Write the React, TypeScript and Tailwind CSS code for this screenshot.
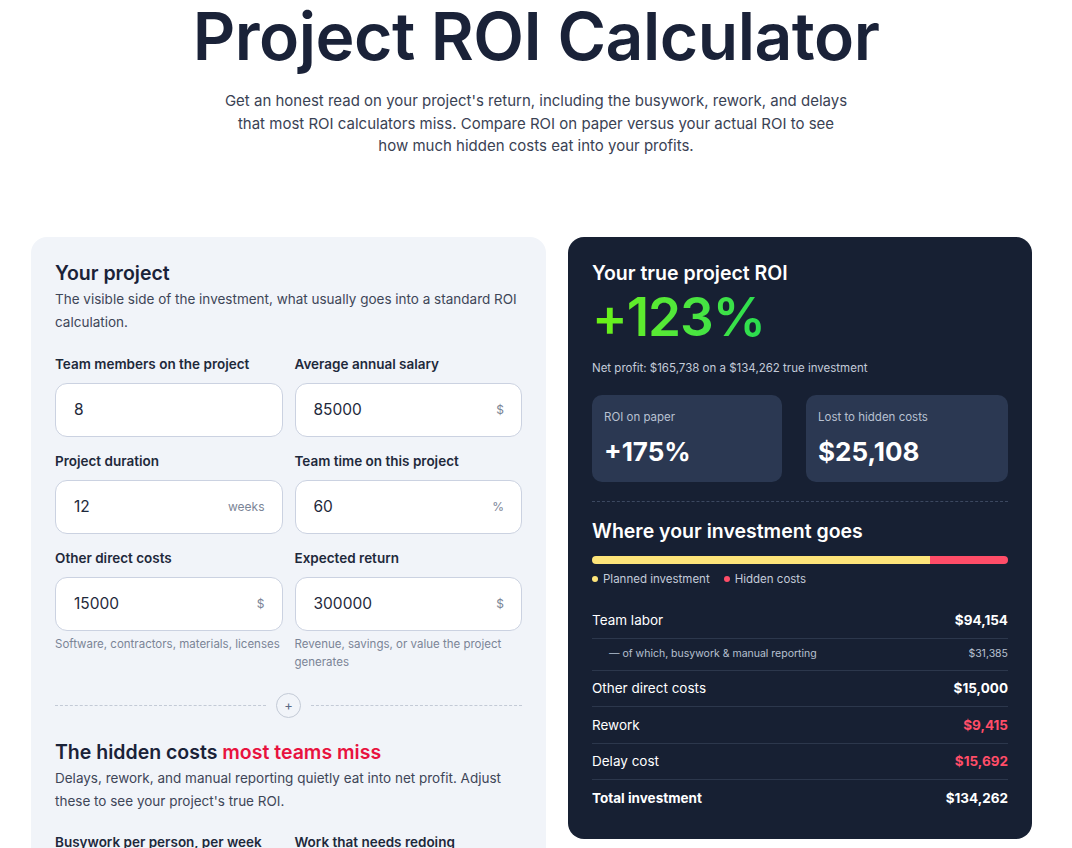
import React from 'react';

const font = { fontFamily: 'Inter, "Noto Sans", sans-serif' };

function Field({
  label,
  value,
  suffix,
  hint,
}: {
  label: string;
  value: string;
  suffix?: string;
  hint?: string;
}) {
  return (
    <div className="flex flex-col">
      <label className="text-[13.5px] font-semibold leading-[20px] text-[#1e293b]">{label}</label>
      <div className="mt-[9px] flex h-[54px] items-center justify-between rounded-[12px] border border-[#cbd2e1] bg-white pl-[18px] pr-[17px]">
        <span className="text-[15.5px] text-[#1e293b]">{value}</span>
        {suffix ? <span className="text-[12px] text-[#7b8597]">{suffix}</span> : null}
      </div>
      {hint ? <p className="mt-[4px] text-[11.5px] leading-[18px] text-[#7b8597]">{hint}</p> : null}
    </div>
  );
}

function Row({
  label,
  value,
  tone = 'white',
  sub = false,
  strong = false,
}: {
  label: string;
  value: string;
  tone?: 'white' | 'red';
  sub?: boolean;
  strong?: boolean;
}) {
  return (
    <div
      className={`flex items-center justify-between border-b border-[#2c374c] last:border-0 ${
        sub ? 'h-[32px] pl-[17px]' : 'h-[36.5px]'
      }`}
    >
      <span
        className={
          sub
            ? 'text-[10.5px] text-[#b8c1d1]'
            : strong
              ? 'text-[13.5px] font-bold text-white'
              : 'text-[13.5px] text-white'
        }
      >
        {sub ? '— ' : ''}
        {label}
      </span>
      <span
        className={
          sub
            ? 'text-[10.5px] text-[#b8c1d1]'
            : `text-[13.5px] font-bold ${tone === 'red' ? 'text-[#ff4d68]' : 'text-white'}`
        }
      >
        {value}
      </span>
    </div>
  );
}

export default function App() {
  return (
    <div className="min-h-[848px] bg-white" style={font}>
      <header className="flex flex-col items-center text-center">
        <h1 className="mt-[-6px] text-[66px] font-semibold leading-[84px] tracking-[-0.5px] text-[#1a2238]">
          Project ROI Calculator
        </h1>
        <p className="mt-[12px] w-[628px] text-[15px] leading-[22.5px] text-[#3a4254]">
          Get an honest read on your project's return, including the busywork, rework, and delays
          that most ROI calculators miss. Compare ROI on paper versus your actual ROI to see how much
          hidden costs eat into your profits.
        </p>
      </header>

      <div className="mt-[79px] grid grid-cols-[515px_464px] items-start gap-[22px] pl-[31px]">
        <section className="h-[640px] rounded-t-[16px] bg-[#f1f4f9] px-[24px] pt-[22px]">
          <h2 className="text-[19.5px] font-semibold leading-[28px] text-[#1a2238]">Your project</h2>
          <p className="mt-[1px] text-[13.5px] leading-[23px] text-[#3e4658]">
            The visible side of the investment, what usually goes into a standard ROI calculation.
          </p>
          <div className="mt-[20px] grid grid-cols-2 gap-x-[12px] gap-y-[14px]">
            <Field label="Team members on the project" value="8" />
            <Field label="Average annual salary" value="85000" suffix="$" />
            <Field label="Project duration" value="12" suffix="weeks" />
            <Field label="Team time on this project" value="60" suffix="%" />
            <Field
              label="Other direct costs"
              value="15000"
              suffix="$"
              hint="Software, contractors, materials, licenses"
            />
            <Field
              label="Expected return"
              value="300000"
              suffix="$"
              hint="Revenue, savings, or value the project generates"
            />
          </div>

          <div className="mt-[22px] flex items-center gap-[10px]">
            <div className="flex-1 border-t border-dashed border-[#c3cad6]" />
            <div className="flex h-[25px] w-[25px] items-center justify-center rounded-full border border-[#c3cad6] text-[13px] leading-none text-[#5a6a85]">
              +
            </div>
            <div className="flex-1 border-t border-dashed border-[#c3cad6]" />
          </div>

          <h2 className="mt-[20px] text-[19.5px] font-semibold leading-[28px] text-[#1a2238]">
            The hidden costs <span className="text-[#e8123f]">most teams miss</span>
          </h2>
          <p className="mt-[1px] text-[13.5px] leading-[23px] text-[#3e4658]">
            Delays, rework, and manual reporting quietly eat into net profit. Adjust these to see your
            project's true ROI.
          </p>
          <div className="mt-[19px] grid grid-cols-2 gap-x-[12px]">
            <span className="text-[13.5px] font-semibold leading-[20px] text-[#1e293b]">
              Busywork per person, per week
            </span>
            <span className="text-[13.5px] font-semibold leading-[20px] text-[#1e293b]">
              Work that needs redoing
            </span>
          </div>
        </section>

        <section className="rounded-[16px] bg-[#172033] px-[24px] pt-[22px] pb-[22px]">
          <h2 className="text-[19.5px] font-semibold leading-[28px] text-white">Your true project ROI</h2>
          <div className="mt-[-2px] w-fit bg-gradient-to-r from-[#6cf20c] to-[#27dc50] bg-clip-text text-[53px] font-semibold leading-[64px] tracking-[-1px] text-transparent">
            +123%
          </div>
          <p className="mt-[11px] text-[11.5px] text-[#c3cbd9]">
            Net profit: $165,738 on a $134,262 true investment
          </p>
          <div className="mt-[18px] grid grid-cols-[190px_1fr] gap-[24px]">
            <div className="h-[87px] rounded-[10px] bg-[#2b3852] px-[12px] pt-[14px]">
              <div className="text-[11.5px] text-[#b8c1d1]">ROI on paper</div>
              <div className="mt-[9px] text-[26px] font-bold leading-[34px] text-white">+175%</div>
            </div>
            <div className="h-[87px] rounded-[10px] bg-[#2b3852] px-[12px] pt-[14px]">
              <div className="text-[11.5px] text-[#b8c1d1]">Lost to hidden costs</div>
              <div className="mt-[9px] text-[26px] font-bold leading-[34px] text-white">$25,108</div>
            </div>
          </div>

          <div className="mt-[19px] border-t border-dashed border-[#3c4860]" />

          <h2 className="mt-[15px] text-[19.5px] font-semibold leading-[28px] text-white">
            Where your investment goes
          </h2>
          <div className="mt-[11px] flex h-[8px] overflow-hidden rounded-full">
            <div className="h-full bg-[#fde47a]" style={{ width: '81.3%' }} />
            <div className="h-full flex-1 bg-[#ff4d68]" />
          </div>
          <div className="mt-[7px] flex items-center gap-[14px] text-[11.5px] text-[#c3cbd9]">
            <span className="flex items-center gap-[5px]">
              <span className="h-[6px] w-[6px] rounded-full bg-[#fde47a]" />
              Planned investment
            </span>
            <span className="flex items-center gap-[5px]">
              <span className="h-[6px] w-[6px] rounded-full bg-[#ff4d68]" />
              Hidden costs
            </span>
          </div>

          <div className="mt-[14px] flex flex-col">
            <Row label="Team labor" value="$94,154" />
            <Row label="of which, busywork & manual reporting" value="$31,385" sub />
            <Row label="Other direct costs" value="$15,000" />
            <Row label="Rework" value="$9,415" tone="red" />
            <Row label="Delay cost" value="$15,692" tone="red" />
            <Row label="Total investment" value="$134,262" strong />
          </div>
        </section>
      </div>
    </div>
  );
}
